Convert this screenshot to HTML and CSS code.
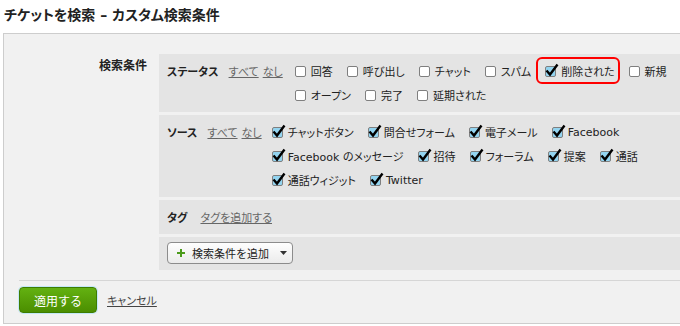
FILE: index.html
```html
<!DOCTYPE html>
<html lang="ja">
<head>
    <meta charset="UTF-8">
    <title>チケットを検索</title>
    <link rel="stylesheet" href="styles.css">
</head>
<body>
    <h1 class="page-title">チケットを検索 – カスタム検索条件</h1>

    <div class="panel">
        <div class="criteria">
            <div class="criteria-label">検索条件</div>
            <div class="criteria-list">

                <div class="section">
                    <div class="section-head">
                        <span class="section-name">ステータス</span>
                        <a href="#">すべて</a>
                        <a href="#">なし</a>
                    </div>
                    <div class="options status-options">
                        <div class="option-row">
                            <label class="option"><span class="box"></span>回答</label>
                            <label class="option"><span class="box"></span>呼び出し</label>
                            <label class="option"><span class="box"></span>チャット</label>
                            <label class="option"><span class="box"></span>スパム</label>
                            <label class="option marked"><span class="box checked"><svg class="tick" viewBox="0 0 14 14"><path d="M1.5 6.5 L5 10.5 L12.5 0.5"/></svg></span>削除された<span class="highlight"></span></label>
                            <label class="option"><span class="box"></span>新規</label>
                        </div>
                        <div class="option-row">
                            <label class="option"><span class="box"></span>オープン</label>
                            <label class="option"><span class="box"></span>完了</label>
                            <label class="option"><span class="box"></span>延期された</label>
                        </div>
                    </div>
                </div>

                <div class="section">
                    <div class="section-head">
                        <span class="section-name">ソース</span>
                        <a href="#">すべて</a>
                        <a href="#">なし</a>
                    </div>
                    <div class="options">
                        <div class="option-row">
                            <label class="option"><span class="box checked"><svg class="tick" viewBox="0 0 14 14"><path d="M1.5 6.5 L5 10.5 L12.5 0.5"/></svg></span>チャットボタン</label>
                            <label class="option"><span class="box checked"><svg class="tick" viewBox="0 0 14 14"><path d="M1.5 6.5 L5 10.5 L12.5 0.5"/></svg></span>問合せフォーム</label>
                            <label class="option"><span class="box checked"><svg class="tick" viewBox="0 0 14 14"><path d="M1.5 6.5 L5 10.5 L12.5 0.5"/></svg></span>電子メール</label>
                            <label class="option"><span class="box checked"><svg class="tick" viewBox="0 0 14 14"><path d="M1.5 6.5 L5 10.5 L12.5 0.5"/></svg></span>Facebook</label>
                        </div>
                        <div class="option-row">
                            <label class="option"><span class="box checked"><svg class="tick" viewBox="0 0 14 14"><path d="M1.5 6.5 L5 10.5 L12.5 0.5"/></svg></span>Facebook のメッセージ</label>
                            <label class="option"><span class="box checked"><svg class="tick" viewBox="0 0 14 14"><path d="M1.5 6.5 L5 10.5 L12.5 0.5"/></svg></span>招待</label>
                            <label class="option"><span class="box checked"><svg class="tick" viewBox="0 0 14 14"><path d="M1.5 6.5 L5 10.5 L12.5 0.5"/></svg></span>フォーラム</label>
                            <label class="option"><span class="box checked"><svg class="tick" viewBox="0 0 14 14"><path d="M1.5 6.5 L5 10.5 L12.5 0.5"/></svg></span>提案</label>
                            <label class="option"><span class="box checked"><svg class="tick" viewBox="0 0 14 14"><path d="M1.5 6.5 L5 10.5 L12.5 0.5"/></svg></span>通話</label>
                        </div>
                        <div class="option-row">
                            <label class="option"><span class="box checked"><svg class="tick" viewBox="0 0 14 14"><path d="M1.5 6.5 L5 10.5 L12.5 0.5"/></svg></span>通話ウィジット</label>
                            <label class="option"><span class="box checked"><svg class="tick" viewBox="0 0 14 14"><path d="M1.5 6.5 L5 10.5 L12.5 0.5"/></svg></span>Twitter</label>
                        </div>
                    </div>
                </div>

                <div class="section">
                    <div class="section-head">
                        <span class="section-name tag-name">タグ</span>
                        <a href="#">タグを追加する</a>
                    </div>
                </div>

                <div class="section add-section">
                    <button class="add-button" type="button">
                        <svg class="plus" viewBox="0 0 8 8"><path d="M3 0h2v3h3v2H5v3H3V5H0V3h3z"/></svg>
                        <span class="add-text">検索条件を追加</span>
                        <svg class="caret" viewBox="0 0 7 4"><path d="M0 0h7L3.5 4z"/></svg>
                    </button>
                </div>

            </div>
        </div>

        <div class="actions">
            <button class="apply" type="button">適用する</button>
            <a href="#" class="cancel">キャンセル</a>
        </div>
    </div>
</body>
</html>
```

FILE: styles.css
```css
html, body {
    overflow: hidden;
}
body {
    margin: 0;
    padding: 0 0 0 3px;
    font-family: "DejaVu Sans", "Noto Sans CJK JP", sans-serif;
    font-size: 11px;
    font-feature-settings: "palt";
    color: #222;
    background: #fff;
}
.page-title {
    margin: 0 0 10px;
    padding: 7px 0 0 1px;
    font-size: 14px;
    line-height: 16px;
    font-weight: bold;
    color: #222;
}
.panel {
    width: 720px;
    background: #f1f1f1;
    border: 1px solid #cdcdcd;
    border-right: none;
    padding: 20px 0 10px;
}
.criteria {
    display: flex;
}
.criteria-label {
    width: 143px;
    padding-right: 12px;
    text-align: right;
    font-size: 12px;
    font-weight: bold;
    line-height: 24px;
}
.criteria-list {
    flex: 1;
    display: flex;
    flex-direction: column;
    gap: 3px;
}
.section {
    display: flex;
    background: #e4e4e4;
    padding: 5px 0 5px 8px;
}
.add-section {
    padding-bottom: 6px;
}
.section-head {
    display: flex;
    align-items: center;
    height: 24px;
    white-space: nowrap;
}
.section-name {
    font-size: 11px;
    font-weight: bold;
    margin-right: 10px;
}
.tag-name {
    margin-right: 13px;
}
.section-head a {
    color: #666;
    text-decoration: underline;
    margin-right: 4px;
}
.options {
    margin-left: 6px;
}
.status-options {
    margin-left: 8px;
}
.option-row {
    display: flex;
    align-items: center;
    height: 24px;
}
.option {
    position: relative;
    display: inline-flex;
    align-items: center;
    margin-right: 14px;
    white-space: nowrap;
}
.box {
    position: relative;
    width: 11px;
    height: 11px;
    box-sizing: border-box;
    border: 1px solid #7f7f7f;
    border-radius: 2px;
    background: #fff;
    margin-right: 5px;
}
.box.checked {
    background: #93d4f0;
}
.tick {
    position: absolute;
    left: -1px;
    top: -3px;
    width: 14px;
    height: 14px;
    overflow: visible;
}
.tick path {
    fill: none;
    stroke: #000;
    stroke-width: 2.4;
    stroke-linejoin: miter;
}
.highlight {
    position: absolute;
    left: -9px;
    right: -5px;
    top: -6px;
    bottom: -5px;
    border: 2.5px solid #f00;
    border-radius: 6px;
}
.add-button {
    display: flex;
    align-items: center;
    width: 126px;
    height: 22px;
    box-sizing: border-box;
    padding: 0 5px 0 9px;
    border: 1px solid #8c8c8c;
    border-radius: 4px;
    background: linear-gradient(#fefefe, #ebebeb);
    font-family: inherit;
    font-size: 11px;
    color: #222;
}
.plus {
    width: 8px;
    height: 8px;
    fill: #4c9b1c;
}
.add-text {
    margin-left: 7px;
}
.caret {
    width: 7px;
    height: 4px;
    margin-left: auto;
    fill: #333;
}
.actions {
    display: flex;
    align-items: center;
    margin: 10px 0 0 15px;
    padding-top: 6px;
    border-top: 1px solid #d6d6d6;
}
.apply {
    width: 78px;
    height: 26px;
    border: 1px solid #3f7c00;
    border-radius: 4px;
    background: linear-gradient(#63b111, #4b8e00);
    box-shadow: 0 0 0 1px #c3e8f7;
    color: #fff;
    font-family: inherit;
    font-size: 12px;
}
.cancel {
    margin-left: 10px;
    font-size: 11px;
    color: #444;
    text-decoration: underline;
}
```
